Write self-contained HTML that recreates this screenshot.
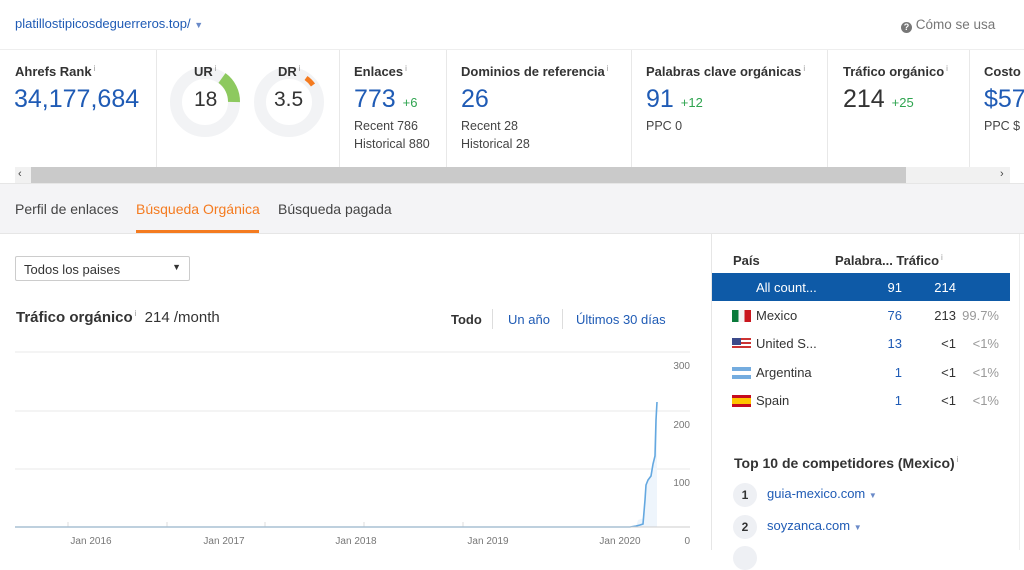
<!DOCTYPE html><html><head><meta charset="utf-8"><style>
*{margin:0;padding:0;box-sizing:border-box}
body{width:1024px;height:550px;overflow:hidden;background:#fff;font-family:"Liberation Sans",sans-serif;color:#333;position:relative}
.a{position:absolute;white-space:nowrap}
.b{color:#1f5bb5}.g{color:#2ea44f}
.lab{font-size:13px;font-weight:bold;color:#333}
.lab sup,.sup{font-size:8px;color:#999;font-weight:normal;vertical-align:top;margin-left:2px}
.big{font-size:25px}
.sm{font-size:12.5px;color:#444}
.vl{position:absolute;top:50px;height:117px;width:1px;background:#e8e8e8}
.row{position:absolute;left:712px;width:298px;height:28px;font-size:13px}
.row span{position:absolute;top:7px}
</style></head><body>
<div class="a b" style="left:15px;top:16px;font-size:13px">platillostipicosdeguerreros.top/ <span style="font-size:9px;color:#6a8ac8">▼</span></div>
<div class="a" style="left:901px;top:17px;font-size:13.5px;color:#777"><span style="display:inline-block;width:11px;height:11px;border-radius:50%;background:#777;color:#fff;font-size:9px;text-align:center;line-height:11px;font-weight:bold;vertical-align:-1px">?</span> Cómo se usa</div>
<div class="a" style="left:0;top:49px;width:1024px;height:1px;background:#eee"></div>
<div class="vl" style="left:156px"></div><div class="vl" style="left:339px"></div><div class="vl" style="left:446px"></div><div class="vl" style="left:631px"></div><div class="vl" style="left:827px"></div><div class="vl" style="left:969px"></div>
<div class="a lab" style="left:15px;top:64px">Ahrefs Rank<sup>i</sup></div>
<div class="a b big" style="left:14px;top:85px">34,177,684</div>
<svg class="a" style="left:168px;top:67px" width="160" height="72">
<circle cx="37" cy="35" r="29" fill="none" stroke="#f2f3f5" stroke-width="12"/>
<path d="M54 11 A29 29 0 0 1 66 35" fill="none" stroke="#8dc95f" stroke-width="12"/>
<circle cx="121" cy="35" r="29" fill="none" stroke="#f2f3f5" stroke-width="12"/>
<path d="M138 11 A29 29 0 0 1 145 18" fill="none" stroke="#f47b20" stroke-width="5"/>
</svg>
<div class="a lab" style="left:194px;top:64px">UR<sup>i</sup></div>
<div class="a" style="left:194px;top:88px;font-size:21px">18</div>
<div class="a lab" style="left:278px;top:64px">DR<sup>i</sup></div>
<div class="a" style="left:274px;top:88px;font-size:21px">3.5</div>
<div class="a lab" style="left:354px;top:64px">Enlaces<sup>i</sup></div>
<div class="a b big" style="left:354px;top:85px">773 <span class="g" style="font-size:13px">+6</span></div>
<div class="a sm" style="left:354px;top:119px">Recent 786</div><div class="a sm" style="left:354px;top:137px">Historical 880</div>
<div class="a lab" style="left:461px;top:64px">Dominios de referencia<sup>i</sup></div>
<div class="a b big" style="left:461px;top:85px">26</div>
<div class="a sm" style="left:461px;top:119px">Recent 28</div><div class="a sm" style="left:461px;top:137px">Historical 28</div>
<div class="a lab" style="left:646px;top:64px">Palabras clave orgánicas<sup>i</sup></div>
<div class="a b big" style="left:646px;top:85px">91 <span class="g" style="font-size:13px">+12</span></div>
<div class="a sm" style="left:646px;top:119px">PPC 0</div>
<div class="a lab" style="left:843px;top:64px">Tráfico orgánico<sup>i</sup></div>
<div class="a big" style="left:843px;top:85px">214 <span class="g" style="font-size:13px">+25</span></div>
<div class="a lab" style="left:984px;top:64px">Costo</div>
<div class="a b big" style="left:984px;top:85px">$57</div>
<div class="a sm" style="left:984px;top:119px">PPC $</div>
<div class="a" style="left:15px;top:167px;width:995px;height:16px;background:#f1f1f1"></div>
<div class="a" style="left:31px;top:167px;width:875px;height:16px;background:#cacaca"></div>
<div class="a" style="left:18px;top:168px;font-size:11px;color:#444">‹</div>
<div class="a" style="left:1000px;top:168px;font-size:11px;color:#444">›</div>
<div class="a" style="left:0;top:183px;width:1024px;height:51px;background:#f4f4f6;border-top:1px solid #e6e6e6;border-bottom:1px solid #e6e6e6"></div>
<div class="a" style="left:15px;top:201px;font-size:14px;color:#444">Perfil de enlaces</div>
<div class="a" style="left:136px;top:201px;font-size:14px;color:#f47b20">Búsqueda Orgánica</div>
<div class="a" style="left:136px;top:230px;width:123px;height:3px;background:#f47b20"></div>
<div class="a" style="left:278px;top:201px;font-size:14px;color:#444">Búsqueda pagada</div>
<div class="a" style="left:711px;top:234px;width:1px;height:316px;background:#e6e6e6"></div>
<div class="a" style="left:1019px;top:234px;width:1px;height:316px;background:#eee"></div>
<div class="a" style="left:15px;top:256px;width:175px;height:25px;border:1px solid #ccc;border-radius:2px;font-size:13px;padding:5px 8px;color:#333">Todos los paises<span style="position:absolute;right:8px;top:5px;font-size:9px">▼</span></div>
<div class="a" style="left:16px;top:309px;font-size:15px;font-weight:bold;color:#333">Tráfico orgánico<span class="sup">i</span> <span style="font-weight:normal;margin-left:4px">214 /month</span></div>
<div class="a" style="left:451px;top:312px;font-size:13px;font-weight:bold">Todo</div>
<div class="a" style="left:492px;top:309px;width:1px;height:20px;background:#ddd"></div>
<div class="a b" style="left:508px;top:312px;font-size:13px">Un año</div>
<div class="a" style="left:562px;top:309px;width:1px;height:20px;background:#ddd"></div>
<div class="a b" style="left:576px;top:312px;font-size:13px">Últimos 30 días</div>
<svg class="a" style="left:0;top:340px" width="711" height="210">
<g stroke="#e8e8e8"><line x1="15" y1="12" x2="690" y2="12"/><line x1="15" y1="71" x2="690" y2="71"/><line x1="15" y1="129" x2="690" y2="129"/></g>
<g stroke="#ddd"><line x1="68" y1="182" x2="68" y2="187"/><line x1="167" y1="182" x2="167" y2="187"/><line x1="265" y1="182" x2="265" y2="187"/><line x1="364" y1="182" x2="364" y2="187"/><line x1="463" y1="182" x2="463" y2="187"/></g>
<path d="M636 187 L638 180 L644 178 L646 145 L648 140 L651 136 L653 124 L655 116 L656 80 L657 68 L657 187Z" fill="#eef5fc"/>
<path d="M15 187 L470 187 L630 187 L636 186 L640 185 L643 184 L645 160 L646 145 L648 140 L651 136 L653 124 L655 116 L656 80 L657 62" fill="none" stroke="#64a8e0" stroke-width="1.6"/>
<line x1="15" y1="187" x2="690" y2="187" stroke="#ccc"/>
<g font-size="10" fill="#777" font-family="Liberation Sans"><text x="690" y="29" text-anchor="end">300</text><text x="690" y="88" text-anchor="end">200</text><text x="690" y="146" text-anchor="end">100</text><text x="690" y="204" text-anchor="end">0</text>
<text x="91" y="204" text-anchor="middle">Jan 2016</text><text x="224" y="204" text-anchor="middle">Jan 2017</text><text x="356" y="204" text-anchor="middle">Jan 2018</text><text x="488" y="204" text-anchor="middle">Jan 2019</text><text x="620" y="204" text-anchor="middle">Jan 2020</text></g>
</svg>
<div class="a lab" style="left:733px;top:253px">País</div>
<div class="a lab" style="left:835px;top:253px">Palabra... Tráfico<sup>i</sup></div>
<div class="row" style="top:273px;background:#0e5aa7;color:#fff;height:28px"><span style="left:44px">All count...</span><span style="right:108px">91</span><span style="right:54px">214</span></div>
<div class="row" style="top:301px"><span style="left:20px;top:9px;width:19px;height:12px;background:linear-gradient(90deg,#0a7a3a 33%,#f4f4f4 33% 66%,#c9161e 66%)"></span><span style="left:44px">Mexico</span><span class="b" style="right:108px">76</span><span style="right:54px">213</span><span style="right:11px;color:#999">99.7%</span></div>
<div class="row" style="top:329px"><span style="left:20px;top:9px;width:19px;height:12px;background:repeating-linear-gradient(#c33 0 2px,#fff 2px 4px)"><i style="position:absolute;left:0;top:0;width:9px;height:7px;background:#3c4a8a"></i></span><span style="left:44px">United S...</span><span class="b" style="right:108px">13</span><span style="right:54px">&lt;1</span><span style="right:11px;color:#999">&lt;1%</span></div>
<div class="row" style="top:358px"><span style="left:20px;top:9px;width:19px;height:12px;background:linear-gradient(#74acdf 33%,#fff 33% 66%,#74acdf 66%)"></span><span style="left:44px">Argentina</span><span class="b" style="right:108px">1</span><span style="right:54px">&lt;1</span><span style="right:11px;color:#999">&lt;1%</span></div>
<div class="row" style="top:386px"><span style="left:20px;top:9px;width:19px;height:12px;background:linear-gradient(#c60b1e 25%,#ffc400 25% 75%,#c60b1e 75%)"></span><span style="left:44px">Spain</span><span class="b" style="right:108px">1</span><span style="right:54px">&lt;1</span><span style="right:11px;color:#999">&lt;1%</span></div>
<div class="a" style="left:734px;top:455px;font-size:14px;font-weight:bold">Top 10 de competidores (Mexico)<span class="sup">i</span></div>
<div class="a" style="left:733px;top:483px;width:24px;height:24px;border-radius:50%;background:#eef0f4;font-size:12px;font-weight:bold;text-align:center;line-height:24px">1</div>
<div class="a b" style="left:767px;top:486px;font-size:13px">guia-mexico.com <span style="font-size:8px;color:#6a8ac8">▼</span></div>
<div class="a" style="left:733px;top:515px;width:24px;height:24px;border-radius:50%;background:#eef0f4;font-size:12px;font-weight:bold;text-align:center;line-height:24px">2</div>
<div class="a b" style="left:767px;top:518px;font-size:13px">soyzanca.com <span style="font-size:8px;color:#6a8ac8">▼</span></div>
<div class="a" style="left:733px;top:546px;width:24px;height:24px;border-radius:50%;background:#eef0f4"></div>
</body></html>
